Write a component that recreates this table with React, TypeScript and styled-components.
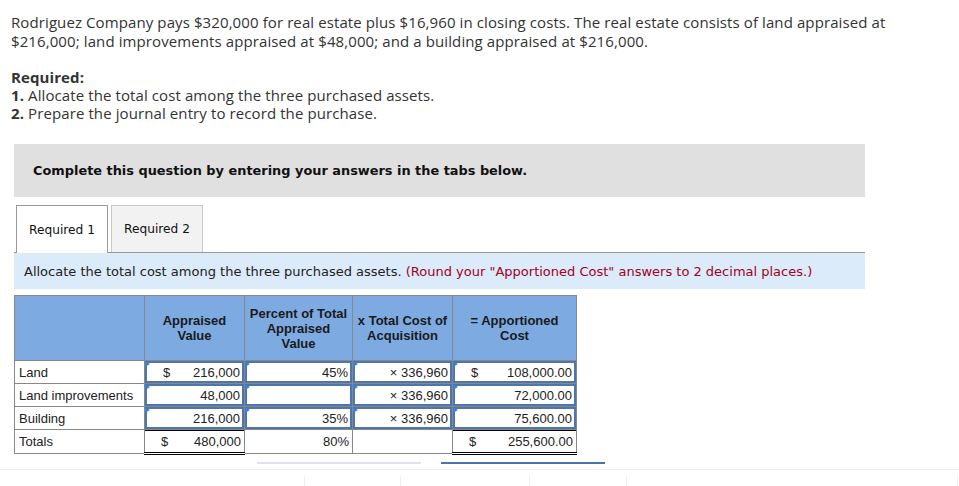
import React from 'react'
import styled, { createGlobalStyle } from 'styled-components'

const GlobalStyle = createGlobalStyle`
  body {
    margin: 0;
    background: #fff;
  }
`

type Cell = {
  kind: 'plain' | 'input' | 'total'
  dollar?: boolean
  text?: string
}

type Row = {
  label: string
  cells: Cell[]
}

const rows: Row[] = [
  {
    label: 'Land',
    cells: [
      { kind: 'input', dollar: true, text: '216,000' },
      { kind: 'input', text: '45%' },
      { kind: 'input', text: '× 336,960' },
      { kind: 'input', dollar: true, text: '108,000.00' },
    ],
  },
  {
    label: 'Land improvements',
    cells: [
      { kind: 'input', text: '48,000' },
      { kind: 'input', text: '' },
      { kind: 'input', text: '× 336,960' },
      { kind: 'input', text: '72,000.00' },
    ],
  },
  {
    label: 'Building',
    cells: [
      { kind: 'input', text: '216,000' },
      { kind: 'input', text: '35%' },
      { kind: 'input', text: '× 336,960' },
      { kind: 'input', text: '75,600.00' },
    ],
  },
  {
    label: 'Totals',
    cells: [
      { kind: 'total', dollar: true, text: '480,000' },
      { kind: 'plain', text: '80%' },
      { kind: 'plain', text: '' },
      { kind: 'total', dollar: true, text: '255,600.00' },
    ],
  },
]

export default function App() {
  return (
    <Page>
      <GlobalStyle />
      <Problem>
        <p>
          Rodriguez Company pays $320,000 for real estate plus $16,960 in closing costs. The real estate consists of land appraised at
          <br />
          $216,000; land improvements appraised at $48,000; and a building appraised at $216,000.
        </p>
        <Required>
          <b>Required:</b>
          <div><b>1.</b> Allocate the total cost among the three purchased assets.</div>
          <div><b>2.</b> Prepare the journal entry to record the purchase.</div>
        </Required>
      </Problem>

      <Panel>
        <Notice>Complete this question by entering your answers in the tabs below.</Notice>

        <Tabs>
          <Tab active>Required 1</Tab>
          <Tab>Required 2</Tab>
        </Tabs>

        <Instruction>
          Allocate the total cost among the three purchased assets.{' '}
          <span>(Round your "Apportioned Cost" answers to 2 decimal places.)</span>
        </Instruction>

        <Grid>
          <colgroup>
            <col style={{ width: 130 }} />
            <col style={{ width: 100 }} />
            <col style={{ width: 108 }} />
            <col style={{ width: 100 }} />
            <col style={{ width: 124 }} />
          </colgroup>
          <thead>
            <tr>
              <Head />
              <Head>Appraised<br />Value</Head>
              <Head>Percent of Total<br />Appraised<br />Value</Head>
              <Head>x Total Cost of<br />Acquisition</Head>
              <Head>= Apportioned<br />Cost</Head>
            </tr>
          </thead>
          <tbody>
            {rows.map((row) => (
              <tr key={row.label}>
                <Label>{row.label}</Label>
                {row.cells.map((cell, i) => (
                  <Value key={i} kind={cell.kind}>
                    <Field kind={cell.kind}>
                      {cell.kind === 'input' && <Flag />}
                      <span>{cell.dollar ? '$' : ''}</span>
                      <span>{cell.text}</span>
                    </Field>
                  </Value>
                ))}
              </tr>
            ))}
          </tbody>
        </Grid>

        <Pager>
          <PageBar />
          <PageBar current />
        </Pager>
      </Panel>

      <Footer>
        <FooterCell w={304} />
        <FooterCell w={95} />
        <FooterCell w={128} />
        <FooterCell w={96} />
        <FooterCell w={330} />
      </Footer>
    </Page>
  )
}

const Page = styled.div`
  width: 959px;
  height: 486px;
  overflow: hidden;
`

const Problem = styled.div`
  padding: 13px 0 0 11px;
  font-family: 'Open Sans', 'Liberation Sans', sans-serif;
  font-size: 15px;
  letter-spacing: 0.1px;
  line-height: 19px;
  color: #333;
  white-space: nowrap;
  p {
    margin: 0 0 17px 0;
  }
  b {
    font-weight: 700;
  }
`

const Required = styled.div`
  line-height: 18px;
`

const Panel = styled.div`
  margin: 22px 0 0 14px;
  width: 851px;
`

const Notice = styled.div`
  height: 53px;
  display: flex;
  align-items: center;
  padding-left: 19px;
  background: #e0e0e0;
  font-family: 'DejaVu Sans', Verdana, sans-serif;
  font-weight: 700;
  font-size: 12.9px;
  color: #111;
`

const Tabs = styled.div`
  margin-top: 8px;
  display: flex;
  gap: 3px;
  padding-left: 2px;
  border-bottom: 1px solid #999;
`

const Tab = styled.div<{ active?: boolean }>`
  width: 92px;
  box-sizing: border-box;
  display: flex;
  align-items: center;
  justify-content: center;
  font-family: 'DejaVu Sans', Verdana, sans-serif;
  font-size: 12.2px;
  color: #111;
  background: ${(p) => (p.active ? '#fff' : '#f2f2f2')};
  border: 1px solid ${(p) => (p.active ? '#999' : '#c8c8c8')};
  border-bottom: none;
  margin-bottom: ${(p) => (p.active ? '-1px' : '0')};
  height: ${(p) => (p.active ? '48px' : '47px')};
`

const Instruction = styled.div`
  height: 36px;
  display: flex;
  align-items: center;
  padding-left: 10px;
  background: #dcebf9;
  font-family: 'DejaVu Sans', Verdana, sans-serif;
  font-size: 13px;
  color: #222;
  white-space: pre;
  span {
    color: #a3001b;
  }
`

const Grid = styled.table`
  margin-top: 6px;
  border-collapse: collapse;
  table-layout: fixed;
  width: 562px;
  font-family: 'Liberation Sans', Arial, sans-serif;
  font-size: 13px;
  color: #222;
`

const Head = styled.th`
  height: 65px;
  box-sizing: border-box;
  background: #7eaae2;
  border: 1px solid #888;
  font-weight: 700;
  font-size: 13px;
  line-height: 15px;
  text-align: center;
  vertical-align: middle;
  padding: 0;
  color: #1a1a1a;
`

const Label = styled.td`
  height: 22px;
  padding: 0 0 0 4px;
  border: 1px solid #888;
  white-space: nowrap;
`

const Value = styled.td<{ kind: Cell['kind'] }>`
  height: 22px;
  padding: 0;
  border: 1px solid #888;
  ${(p) => (p.kind === 'total' ? 'border-bottom: 3px double #000;' : '')}
`

const Field = styled.div<{ kind: Cell['kind'] }>`
  position: relative;
  height: 22px;
  box-sizing: border-box;
  display: flex;
  align-items: center;
  justify-content: space-between;
  padding: 0 3px 0 16px;
  border: ${(p) => (p.kind === 'input' ? '2px solid #4d76ad' : 'none')};
  border-top: ${(p) => (p.kind === 'total' ? '1px solid #000' : p.kind === 'input' ? '2px solid #4d76ad' : 'none')};
  padding-right: ${(p) => (p.kind === 'input' ? '2px' : '3px')};
`

const Flag = styled.i`
  position: absolute;
  top: -2px;
  left: -2px;
  width: 0;
  height: 0;
  border-left: 5px solid #3b7fd9;
  border-top: 3px solid transparent;
  border-bottom: 3px solid transparent;
`

const Pager = styled.div`
  margin: 7px 0 0 243px;
  display: flex;
  gap: 20px;
`

const PageBar = styled.div<{ current?: boolean }>`
  width: 164px;
  height: 2px;
  background: ${(p) => (p.current ? '#4a74a8' : '#dde4eb')};
`

const Footer = styled.div`
  margin-top: 5px;
  border-top: 1px solid #eee;
  display: flex;
  padding-top: 6px;
  height: 20px;
`

const FooterCell = styled.div<{ w: number }>`
  width: ${(p) => p.w}px;
  flex: none;
  border-right: 1px solid #eee;
`
